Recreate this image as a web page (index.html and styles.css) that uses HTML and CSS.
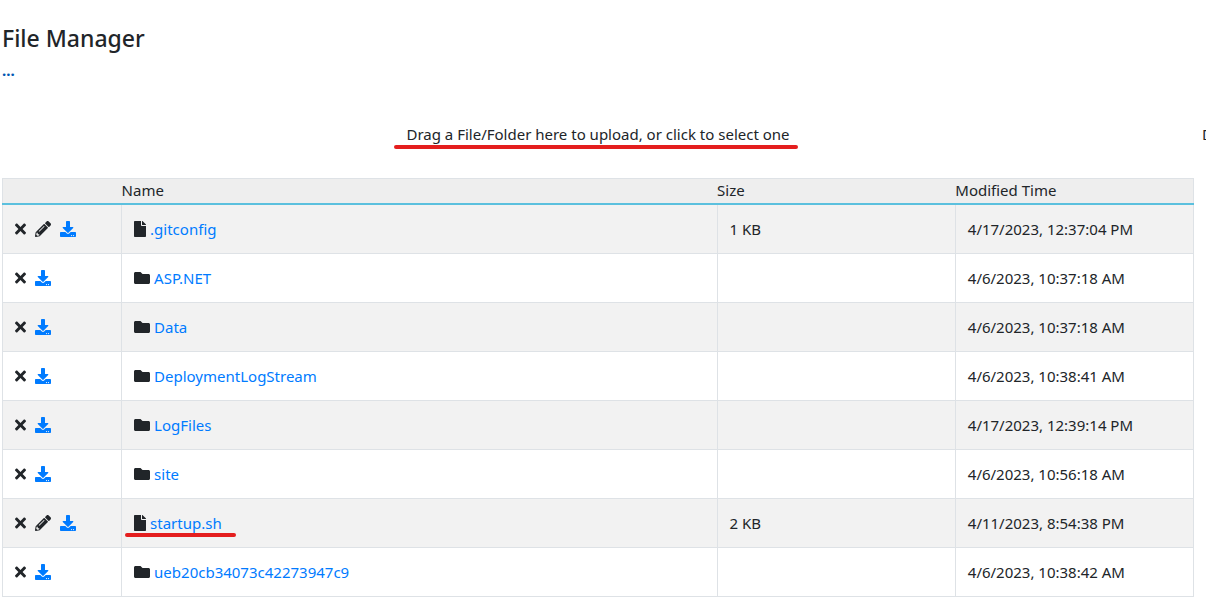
FILE: index.html
```html
<!DOCTYPE html>
<html lang="en">
<head>
<meta charset="utf-8">
<title>File Manager</title>
<link rel="stylesheet" href="styles.css">
</head>
<body>
<svg class="sprite" aria-hidden="true">
  <symbol id="times" viewBox="0 0 352 512"><path d="M242.72 256l100.07-100.07c12.28-12.28 12.28-32.19 0-44.48l-22.24-22.24c-12.28-12.28-32.19-12.28-44.48 0L176 189.28 75.93 89.21c-12.28-12.28-32.19-12.28-44.48 0L9.21 111.45c-12.28 12.28-12.28 32.19 0 44.48L109.28 256 9.21 356.07c-12.28 12.28-12.28 32.19 0 44.48l22.24 22.24c12.28 12.28 32.2 12.28 44.48 0L176 322.72l100.07 100.07c12.28 12.28 32.2 12.28 44.48 0l22.24-22.24c12.28-12.28 12.28-32.19 0-44.48L242.72 256z"/></symbol>
  <symbol id="pencil" viewBox="0 0 512 512"><path d="M497.9 142.1l-46.1 46.1c-4.7 4.7-12.3 4.7-17 0l-111-111c-4.7-4.7-4.7-12.3 0-17l46.1-46.1c18.7-18.7 49.1-18.7 67.9 0l60.1 60.1c18.8 18.7 18.8 49.1 0 67.9zM284.2 99.8L21.6 362.4.4 483.9c-2.9 16.4 11.4 30.6 27.8 27.8l121.500-21.300 262.600-262.600c4.700-4.700 4.700-12.300 0-17l-111-111c-4.800-4.700-12.400-4.700-17.100 0zM124.100 339.900c-5.500-5.500-5.500-14.300 0-19.800l154-154c5.500-5.500 14.300-5.500 19.800 0s5.500 14.300 0 19.800l-154 154c-5.500 5.500-14.300 5.500-19.800 0zM88 424h48v36.300l-64.500 11.300-31.100-31.100L51.700 376H88v48z"/></symbol>
  <symbol id="download" viewBox="0 0 512 512"><path d="M216 0h80c13.300 0 24 10.700 24 24v168h87.700c17.800 0 26.700 21.500 14.100 34.100L269.700 378.300c-7.500 7.500-19.800 7.500-27.300 0L90.100 226.100c-12.600-12.600-3.700-34.100 14.100-34.100H192V24c0-13.300 10.700-24 24-24zm296 376v112c0 13.300-10.700 24-24 24H24c-13.300 0-24-10.700-24-24V376c0-13.300 10.700-24 24-24h146.700l49 49c20.100 20.100 52.500 20.100 72.600 0l49-49H488c13.300 0 24 10.700 24 24zm-124 88c0-11-9-20-20-20s-20 9-20 20 9 20 20 20 20-9 20-20zm64 0c0-11-9-20-20-20s-20 9-20 20 9 20 20 20 20-9 20-20z"/></symbol>
  <symbol id="file" viewBox="0 0 384 512"><path d="M224 136V0H24C10.700 0 0 10.700 0 24v464c0 13.300 10.700 24 24 24h336c13.300 0 24-10.700 24-24V160H248c-13.200 0-24-10.800-24-24zm160-14.100v6.100H256V0h6.100c6.400 0 12.500 2.500 17 7l97.900 98c4.500 4.500 7 10.600 7 16.900z"/></symbol>
  <symbol id="folder" viewBox="0 0 512 512"><path d="M464 128H272l-64-64H48C21.500 64 0 85.500 0 112v288c0 26.500 21.500 48 48 48h416c26.500 0 48-21.500 48-48V176c0-26.500-21.500-48-48-48z"/></symbol>
</svg>
<main class="page">
  <h1 class="title">File Manager</h1>
  <nav class="crumbs"><a class="crumb" href="#">...</a></nav>
  <div class="uploads">
    <button class="dropzone" type="button"><span class="marked">Drag a File/Folder here to upload, or click to select one</span></button>
    <button class="dropzone next" type="button">D</button>
  </div>
  <table class="files">
    <colgroup><col class="col-actions"><col class="col-name"><col class="col-size"><col class="col-time"></colgroup>
    <thead>
      <tr><th aria-label="Actions"></th><th>Name</th><th>Size</th><th>Modified Time</th></tr>
    </thead>
    <tbody>
      <tr>
        <td><div class="actions"><button type="button" aria-label="Delete"><svg class="icon narrow"><use href="#times"/></svg></button><button type="button" aria-label="Edit"><svg class="icon"><use href="#pencil"/></svg></button><a href="#" aria-label="Download"><svg class="icon"><use href="#download"/></svg></a></div></td>
        <td><div class="entry"><svg class="icon sheet"><use href="#file"/></svg><a href="#">.gitconfig</a></div></td>
        <td>1 KB</td><td>4/17/2023, 12:37:04 PM</td>
      </tr>
      <tr>
        <td><div class="actions"><button type="button" aria-label="Delete"><svg class="icon narrow"><use href="#times"/></svg></button><a href="#" aria-label="Download"><svg class="icon"><use href="#download"/></svg></a></div></td>
        <td><div class="entry"><svg class="icon"><use href="#folder"/></svg><a href="#">ASP.NET</a></div></td>
        <td></td><td>4/6/2023, 10:37:18 AM</td>
      </tr>
      <tr>
        <td><div class="actions"><button type="button" aria-label="Delete"><svg class="icon narrow"><use href="#times"/></svg></button><a href="#" aria-label="Download"><svg class="icon"><use href="#download"/></svg></a></div></td>
        <td><div class="entry"><svg class="icon"><use href="#folder"/></svg><a href="#">Data</a></div></td>
        <td></td><td>4/6/2023, 10:37:18 AM</td>
      </tr>
      <tr>
        <td><div class="actions"><button type="button" aria-label="Delete"><svg class="icon narrow"><use href="#times"/></svg></button><a href="#" aria-label="Download"><svg class="icon"><use href="#download"/></svg></a></div></td>
        <td><div class="entry"><svg class="icon"><use href="#folder"/></svg><a href="#">DeploymentLogStream</a></div></td>
        <td></td><td>4/6/2023, 10:38:41 AM</td>
      </tr>
      <tr>
        <td><div class="actions"><button type="button" aria-label="Delete"><svg class="icon narrow"><use href="#times"/></svg></button><a href="#" aria-label="Download"><svg class="icon"><use href="#download"/></svg></a></div></td>
        <td><div class="entry"><svg class="icon"><use href="#folder"/></svg><a href="#">LogFiles</a></div></td>
        <td></td><td>4/17/2023, 12:39:14 PM</td>
      </tr>
      <tr>
        <td><div class="actions"><button type="button" aria-label="Delete"><svg class="icon narrow"><use href="#times"/></svg></button><a href="#" aria-label="Download"><svg class="icon"><use href="#download"/></svg></a></div></td>
        <td><div class="entry"><svg class="icon"><use href="#folder"/></svg><a href="#">site</a></div></td>
        <td></td><td>4/6/2023, 10:56:18 AM</td>
      </tr>
      <tr>
        <td><div class="actions"><button type="button" aria-label="Delete"><svg class="icon narrow"><use href="#times"/></svg></button><button type="button" aria-label="Edit"><svg class="icon"><use href="#pencil"/></svg></button><a href="#" aria-label="Download"><svg class="icon"><use href="#download"/></svg></a></div></td>
        <td><div class="entry marked"><svg class="icon sheet"><use href="#file"/></svg><a href="#">startup.sh</a></div></td>
        <td>2 KB</td><td>4/11/2023, 8:54:38 PM</td>
      </tr>
      <tr>
        <td><div class="actions"><button type="button" aria-label="Delete"><svg class="icon narrow"><use href="#times"/></svg></button><a href="#" aria-label="Download"><svg class="icon"><use href="#download"/></svg></a></div></td>
        <td><div class="entry"><svg class="icon"><use href="#folder"/></svg><a href="#">ueb20cb34073c42273947c9</a></div></td>
        <td></td><td>4/6/2023, 10:38:42 AM</td>
      </tr>
    </tbody>
  </table>
</main>
</body>
</html>
```

FILE: styles.css
```css
* { box-sizing: border-box; }

body {
  margin: 0;
  background: #fff;
  color: #212529;
  font: 15px/24px "Segoe UI", "Noto Sans", "Open Sans", sans-serif;
  overflow-x: hidden;
}

a { color: #007bff; text-decoration: none; }

button {
  padding: 0;
  border: 0;
  background: none;
  color: inherit;
  font: inherit;
  cursor: pointer;
}

.sprite { display: none; }

.page { padding: 24px 12px 12px 2px; }

.title {
  margin: 0 0 6px;
  font-size: 23px;
  font-weight: 500;
  line-height: 28px;
}

.crumbs { display: flex; height: 24px; }
.crumb { color: #0056b3; font-weight: 700; }

.uploads {
  display: flex;
  margin: 12px -12px 4px 0;
  height: 80px;
  overflow: hidden;
}

.dropzone {
  flex: none;
  width: calc(100% - 12px);
  text-align: center;
}

.dropzone.next { padding-left: 8px; text-align: left; }

.marked { position: relative; }

.marked::after {
  content: "";
  position: absolute;
  left: -12px;
  right: -8px;
  bottom: -5px;
  height: 4px;
  border-radius: 2px;
  background: #e41e1e;
}

.entry.marked::after {
  left: -9px;
  right: -14px;
  bottom: -2px;
}

.files {
  width: 100%;
  table-layout: fixed;
  border-collapse: collapse;
  border: 1px solid #dee2e6;
}

.col-actions { width: 10%; }
.col-name { width: 50%; }
.col-size, .col-time { width: 20%; }

.files th {
  padding: 0;
  height: 25px;
  background: #eee;
  border-bottom: 2px solid #5bc0de;
  font-weight: 400;
  line-height: 23px;
  text-align: left;
}

.files td {
  padding: 12px;
  height: 49px;
  border: 1px solid #dee2e6;
}

.files tbody tr:nth-child(odd) { background: #f2f2f2; }

.actions { display: flex; align-items: center; gap: 9px; }
.actions button, .actions a { display: flex; }

.entry {
  display: flex;
  align-items: center;
  gap: 4px;
  width: max-content;
}

.icon {
  display: block;
  width: 16px;
  height: 16px;
  fill: currentColor;
}

.icon.narrow { width: 11px; }
.icon.sheet { width: 12px; }
```
